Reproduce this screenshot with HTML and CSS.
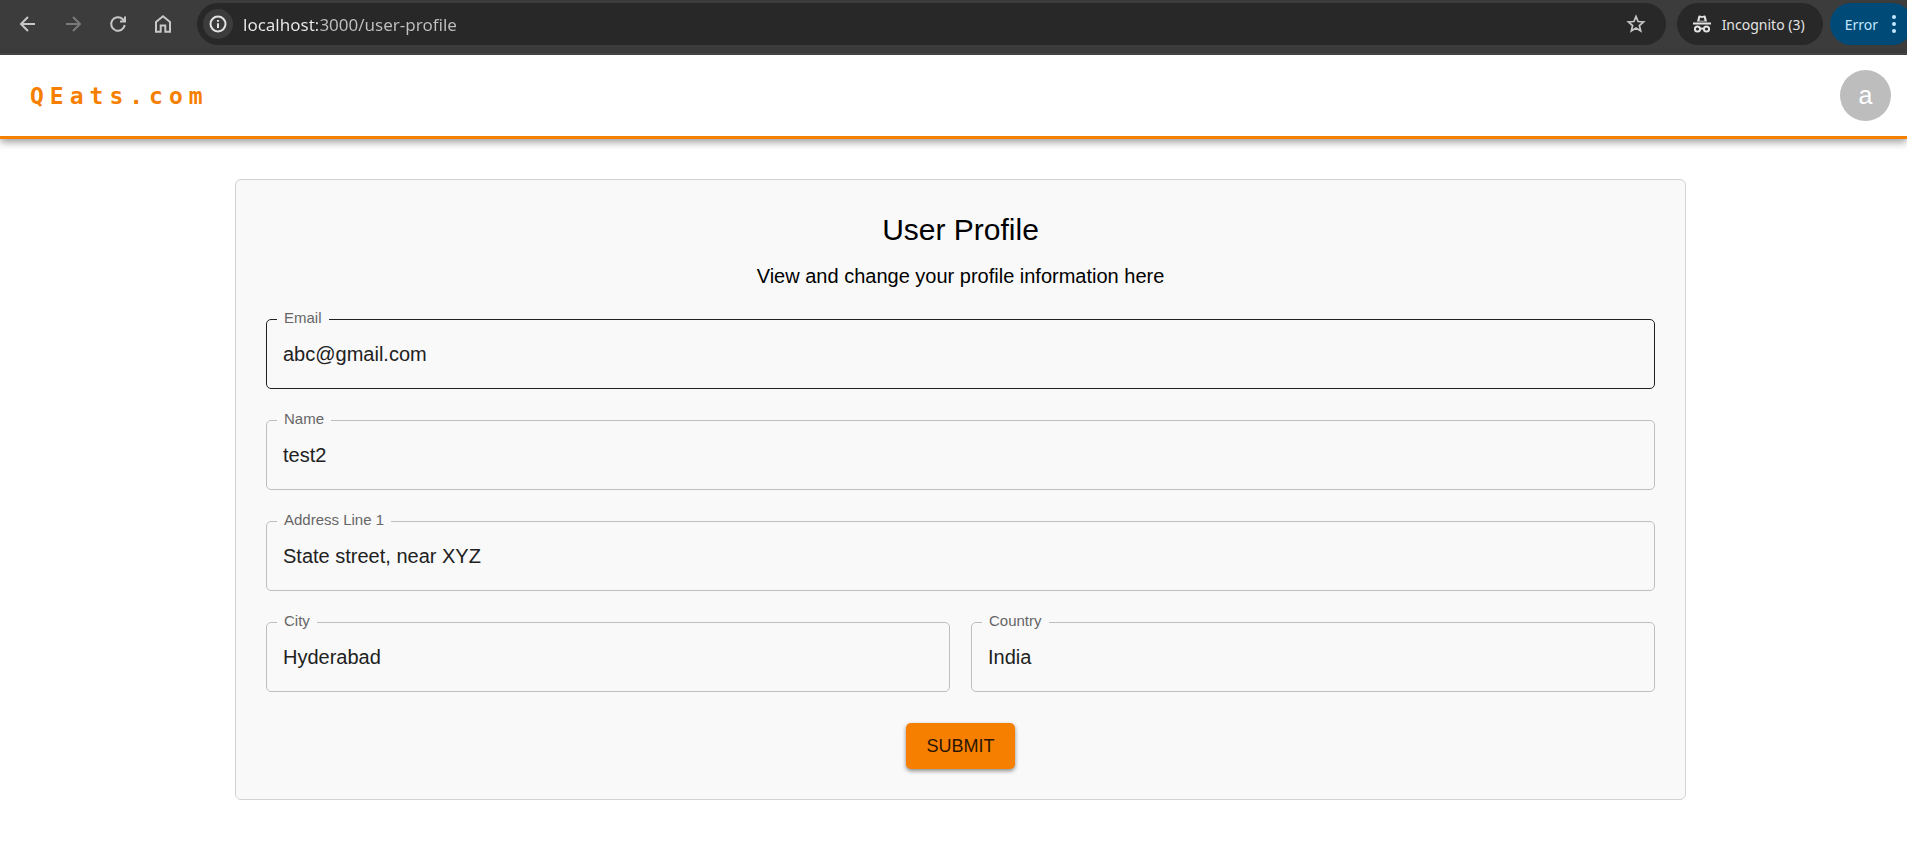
FILE: index.html
```html
<!DOCTYPE html>
<html lang="en">
<head>
<meta charset="utf-8">
<meta name="viewport" content="width=device-width, initial-scale=1">
<title>QEats.com</title>
<link rel="stylesheet" href="styles.css">
</head>
<body>
<div class="toolbar">
  <nav class="toolbar-nav" aria-label="Browser">
    <button class="icon-button" type="button" aria-label="Back">
      <svg class="icon" viewBox="0 0 20 20"><path d="M17 10H3.500M10 3L3 10L10 17"/></svg>
    </button>
    <button class="icon-button icon-button-dim" type="button" aria-label="Forward">
      <svg class="icon" viewBox="0 0 20 20"><path d="M3 10H16.500M10 3L17 10L10 17"/></svg>
    </button>
    <button class="icon-button" type="button" aria-label="Reload">
      <svg class="icon" viewBox="0 0 20 20"><path d="M16.700 11A6.800 6.800 0 1 1 14.800 5.200L16.500 7M17 2.500V7.500H12"/></svg>
    </button>
    <button class="icon-button" type="button" aria-label="Home">
      <svg class="icon" viewBox="0 0 20 20"><path d="M3 17.800V8L10 2.200L17 8V17.800H12.300V11.500H7.700V17.800Z"/></svg>
    </button>
  </nav>
  <div class="address-bar">
    <button class="site-info" type="button" aria-label="Site information">
      <svg class="icon" viewBox="0 0 20 20"><circle cx="10" cy="10" r="7.500"/><path d="M10 9.300V14M10 6V7.800"/></svg>
    </button>
    <input class="address" type="text" aria-label="Address" value="localhost:3000/user-profile">
    <button class="icon-button" type="button" aria-label="Bookmark">
      <svg class="icon icon-light" viewBox="0 0 20 20"><path d="M10 2.500L12.100 7.500L17.600 8L13.400 11.600L14.700 17L10 14.100L5.300 17L6.600 11.600L2.400 8L7.900 7.500Z"/></svg>
    </button>
  </div>
  <button class="pill" type="button">
    <svg class="icon" viewBox="0 0 20 20"><path class="solid" d="M5 7.500L6.300 2.500Q6.600 1.300 7.800 1.600L10 2.200L12.200 1.600Q13.400 1.300 13.700 2.500L15 7.500ZM1 8.600H19V10.400H1Z"/><path class="cut" d="M7.400 6.800L8.200 3.500L10 4L11.800 3.500L12.600 6.800Z"/><circle cx="5.500" cy="15" r="2.600"/><circle cx="14.500" cy="15" r="2.600"/><path d="M8.100 15Q10 13.800 11.900 15"/></svg>
    <span>Incognito (3)</span>
  </button>
  <button class="pill pill-error" type="button">
    <span>Error</span>
    <svg class="dots" viewBox="0 0 4 20"><circle cx="2" cy="3" r="2"/><circle cx="2" cy="10" r="2"/><circle cx="2" cy="17" r="2"/></svg>
  </button>
</div>

<header class="site-header">
  <a class="brand" href="/">QEats.com</a>
  <button class="avatar" type="button" aria-label="Account">a</button>
</header>

<main class="page">
  <form class="card">
    <h1 class="title">User Profile</h1>
    <p class="subtitle">View and change your profile information here</p>
    <div class="fields">
      <div class="field field-active">
        <label class="field-label" for="email">Email</label>
        <input class="field-input" id="email" type="email" value="abc@gmail.com">
      </div>
      <div class="field">
        <label class="field-label" for="name">Name</label>
        <input class="field-input" id="name" type="text" value="test2">
      </div>
      <div class="field">
        <label class="field-label" for="address">Address Line 1</label>
        <input class="field-input" id="address" type="text" value="State street, near XYZ">
      </div>
      <div class="field-row">
        <div class="field">
          <label class="field-label" for="city">City</label>
          <input class="field-input" id="city" type="text" value="Hyderabad">
        </div>
        <div class="field">
          <label class="field-label" for="country">Country</label>
          <input class="field-input" id="country" type="text" value="India">
        </div>
      </div>
      <button class="submit" type="submit">SUBMIT</button>
    </div>
  </form>
</main>
</body>
</html>
```

FILE: styles.css
```css
* {
  box-sizing: border-box;
}

body {
  margin: 0;
  background: #fff;
  color: #000;
  font-family: "Liberation Sans", Arial, sans-serif;
  overflow-x: hidden;
}

button,
input {
  margin: 0;
  padding: 0;
  border: 0;
  background: none;
  font: inherit;
  outline: none;
}

button {
  cursor: pointer;
}

/* Browser toolbar */
.toolbar {
  display: flex;
  align-items: flex-start;
  height: 55px;
  padding-top: 3px;
  background: #3c3c3c;
  border-bottom: 2px solid #474747;
  font-family: "Noto Sans", "Open Sans", sans-serif;
  overflow: hidden;
}

.toolbar-nav {
  display: flex;
  gap: 15px;
  padding: 6px 19px 0 13px;
}

.icon-button {
  display: flex;
  align-items: center;
  justify-content: center;
  flex: none;
  width: 30px;
  height: 30px;
  color: #c7c7c7;
}

.icon-button-dim {
  color: #7b7b7b;
}

.icon {
  flex: none;
  width: 20px;
  height: 20px;
  fill: none;
  stroke: currentColor;
  stroke-width: 2;
}

.icon-light {
  stroke-width: 1.7;
}

.solid {
  fill: currentColor;
  stroke: none;
}

.cut {
  fill: #282828;
  stroke: none;
}

.address-bar {
  display: flex;
  align-items: center;
  flex: 1;
  min-width: 0;
  height: 42px;
  padding: 0 15px 0 6px;
  border-radius: 21px;
  background: #282828;
}

.site-info {
  display: flex;
  align-items: center;
  justify-content: center;
  flex: none;
  width: 30px;
  height: 30px;
  border-radius: 50%;
  background: #3c3c3c;
  color: #e3e3e3;
}

.address {
  flex: 1;
  min-width: 0;
  height: 30px;
  margin-left: 10px;
  color: #c7c7c7;
  font-size: 17px;
  /* The host name is brighter than the rest of the address. */
  background: linear-gradient(to right, #ececec 74px, #c0c0c0 74px);
  -webkit-background-clip: text;
  background-clip: text;
  -webkit-text-fill-color: transparent;
}

.pill {
  display: flex;
  align-items: center;
  flex: none;
  gap: 10px;
  height: 42px;
  margin-left: 11px;
  padding: 0 18px 0 15px;
  border-radius: 21px;
  background: #282828;
  color: #e3e3e3;
  font-size: 14px;
}

.pill-error {
  gap: 14px;
  margin: 0 -6px 0 7px;
  padding: 0 17px 0 15px;
  background: #004a77;
  color: #c2e7ff;
}

.dots {
  width: 4px;
  height: 20px;
  fill: currentColor;
}

/* Site header */
.site-header {
  display: flex;
  align-items: center;
  justify-content: space-between;
  padding: 15px 16px 15px 30px;
  border-bottom: 3px solid #f77f00;
  box-shadow: 0 3px 8px rgba(0, 0, 0, 0.4);
}

.brand {
  color: #f77f00;
  font-family: "DejaVu Sans Mono", monospace;
  font-size: 23px;
  font-weight: 700;
  letter-spacing: 6px;
  text-decoration: none;
}

.avatar {
  width: 51px;
  height: 51px;
  border-radius: 50%;
  background: #bdbdbd;
  color: #fff;
  font-size: 25px;
}

/* Profile form */
.page {
  padding: 40px 24px 40px 38px;
}

.card {
  max-width: 1451px;
  margin: 0 auto;
  padding: 30px;
  border: 1px solid #d3d3d3;
  border-radius: 6px;
  background: #f9f9f9;
}

.title {
  margin: 0;
  font-size: 30px;
  font-weight: 400;
  line-height: 40px;
  text-align: center;
}

.subtitle {
  margin: 11px 0 28px;
  font-size: 20px;
  line-height: 30px;
  text-align: center;
}

.fields {
  display: flex;
  flex-direction: column;
  gap: 31px;
}

.field {
  position: relative;
  flex: 1;
  min-width: 0;
}

.field-row {
  display: flex;
  gap: 21px;
}

.field-label {
  position: absolute;
  top: -10px;
  left: 11px;
  padding: 0 7px;
  background: #f9f9f9;
  color: #666;
  font-size: 15px;
  line-height: 18px;
}

.field-input {
  display: block;
  width: 100%;
  height: 70px;
  padding: 0 16px;
  border: 1px solid #bebebe;
  border-radius: 5px;
  color: #212121;
  font-size: 20px;
}

.field-active .field-input {
  border-color: #212121;
}

.submit {
  align-self: center;
  height: 46px;
  padding: 0 20px;
  border-radius: 5px;
  background: #f77f00;
  box-shadow: 0 2px 4px rgba(0, 0, 0, 0.45);
  color: #2a1600;
  font-size: 18px;
}
```
